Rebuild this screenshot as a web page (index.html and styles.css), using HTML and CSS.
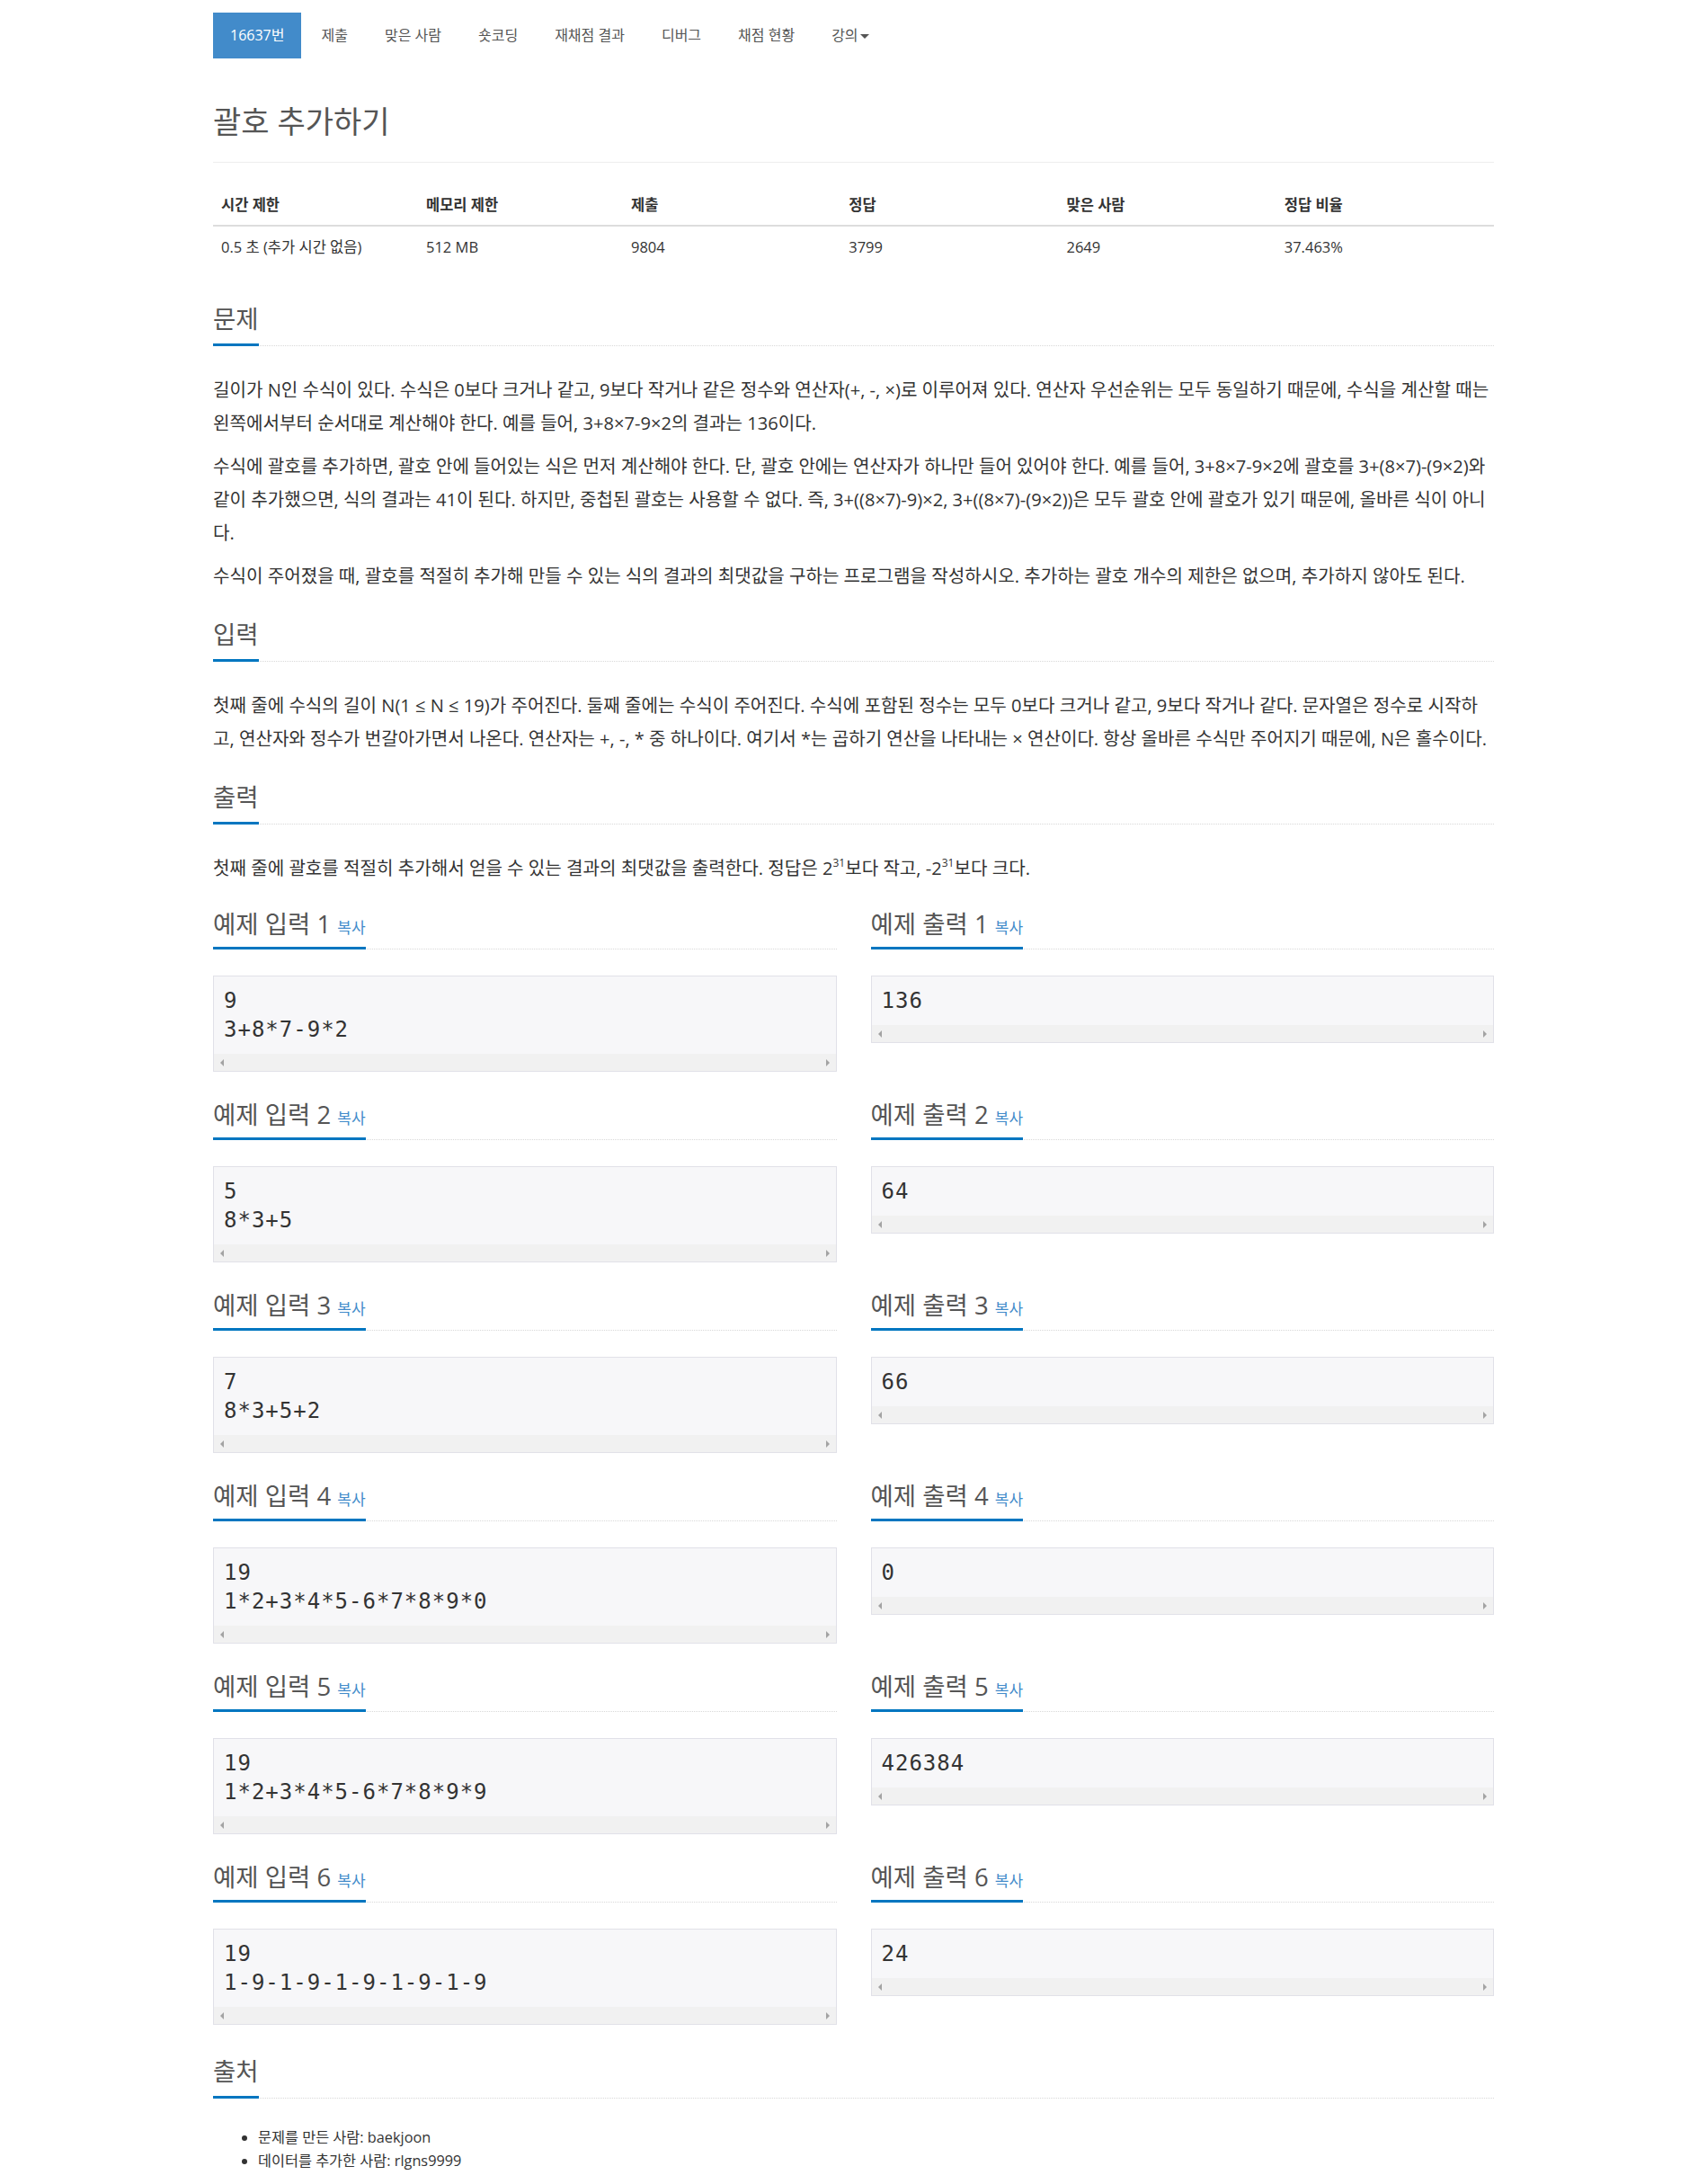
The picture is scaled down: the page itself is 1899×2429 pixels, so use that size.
FILE: index.html
```html
<!DOCTYPE html>
<html lang="ko">
<head>
  <meta charset="UTF-8">
  <title>16637번: 괄호 추가하기</title>
  <link rel="stylesheet" href="styles.css">
</head>
<body>
<div class="container">

  <!-- PROBLEM MENU -->
  <ul class="problem-menu">
    <li class="active"><a href="#">16637번</a></li>
    <li><a href="#">제출</a></li>
    <li><a href="#">맞은 사람</a></li>
    <li><a href="#">숏코딩</a></li>
    <li><a href="#">재채점 결과</a></li>
    <li><a href="#">디버그</a></li>
    <li><a href="#">채점 현황</a></li>
    <li><a href="#">강의<span class="caret"></span></a></li>
  </ul>

  <div class="page-header">
    <h1>괄호 추가하기</h1>
  </div>

  <table class="problem-info">
    <thead>
      <tr>
        <th class="w16">시간 제한</th>
        <th class="w16">메모리 제한</th>
        <th>제출</th>
        <th>정답</th>
        <th>맞은 사람</th>
        <th>정답 비율</th>
      </tr>
    </thead>
    <tbody>
      <tr>
        <td>0.5 초 (추가 시간 없음)</td>
        <td>512 MB</td>
        <td>9804</td>
        <td>3799</td>
        <td>2649</td>
        <td>37.463%</td>
      </tr>
    </tbody>
  </table>

  <!-- DESCRIPTION -->
  <section class="problem-section">
    <div class="headline"><h2>문제</h2></div>
    <div class="problem-text">
      <p>길이가 N인 수식이 있다. 수식은 0보다 크거나 같고, 9보다 작거나 같은 정수와 연산자(+, -, ×)로 이루어져 있다. 연산자 우선순위는 모두 동일하기 때문에, 수식을 계산할 때는 왼쪽에서부터 순서대로 계산해야 한다. 예를 들어, 3+8×7-9×2의 결과는 136이다.</p>
      <p>수식에 괄호를 추가하면, 괄호 안에 들어있는 식은 먼저 계산해야 한다. 단, 괄호 안에는 연산자가 하나만 들어 있어야 한다. 예를 들어, 3+8×7-9×2에 괄호를 3+(8×7)-(9×2)와 같이 추가했으면, 식의 결과는 41이 된다. 하지만, 중첩된 괄호는 사용할 수 없다. 즉, 3+((8×7)-9)×2, 3+((8×7)-(9×2))은 모두 괄호 안에 괄호가 있기 때문에, 올바른 식이 아니다.</p>
      <p>수식이 주어졌을 때, 괄호를 적절히 추가해 만들 수 있는 식의 결과의 최댓값을 구하는 프로그램을 작성하시오. 추가하는 괄호 개수의 제한은 없으며, 추가하지 않아도 된다.</p>
    </div>
  </section>

  <section class="problem-section">
    <div class="headline"><h2>입력</h2></div>
    <div class="problem-text">
      <p>첫째 줄에 수식의 길이 N(1 ≤ N ≤ 19)가 주어진다. 둘째 줄에는 수식이 주어진다. 수식에 포함된 정수는 모두 0보다 크거나 같고, 9보다 작거나 같다. 문자열은 정수로 시작하고, 연산자와 정수가 번갈아가면서 나온다. 연산자는 +, -, * 중 하나이다. 여기서 *는 곱하기 연산을 나타내는 × 연산이다. 항상 올바른 수식만 주어지기 때문에, N은 홀수이다.</p>
    </div>
  </section>

  <section class="problem-section">
    <div class="headline"><h2>출력</h2></div>
    <div class="problem-text">
      <p>첫째 줄에 괄호를 적절히 추가해서 얻을 수 있는 결과의 최댓값을 출력한다. 정답은 2<sup>31</sup>보다 작고, -2<sup>31</sup>보다 크다.</p>
    </div>
  </section>

  <!-- SAMPLES -->
  <div class="samples">
    <section class="sample">
      <div class="headline"><h2>예제 입력 1 <a class="copy" href="#">복사</a></h2></div>
      <div class="sample-box"><pre class="sampledata">9
3+8*7-9*2</pre><div class="scrollbar"><span class="arr-l"></span><span class="arr-r"></span></div></div>
    </section>
    <section class="sample">
      <div class="headline"><h2>예제 출력 1 <a class="copy" href="#">복사</a></h2></div>
      <div class="sample-box"><pre class="sampledata">136</pre><div class="scrollbar"><span class="arr-l"></span><span class="arr-r"></span></div></div>
    </section>

    <section class="sample">
      <div class="headline"><h2>예제 입력 2 <a class="copy" href="#">복사</a></h2></div>
      <div class="sample-box"><pre class="sampledata">5
8*3+5</pre><div class="scrollbar"><span class="arr-l"></span><span class="arr-r"></span></div></div>
    </section>
    <section class="sample">
      <div class="headline"><h2>예제 출력 2 <a class="copy" href="#">복사</a></h2></div>
      <div class="sample-box"><pre class="sampledata">64</pre><div class="scrollbar"><span class="arr-l"></span><span class="arr-r"></span></div></div>
    </section>

    <section class="sample">
      <div class="headline"><h2>예제 입력 3 <a class="copy" href="#">복사</a></h2></div>
      <div class="sample-box"><pre class="sampledata">7
8*3+5+2</pre><div class="scrollbar"><span class="arr-l"></span><span class="arr-r"></span></div></div>
    </section>
    <section class="sample">
      <div class="headline"><h2>예제 출력 3 <a class="copy" href="#">복사</a></h2></div>
      <div class="sample-box"><pre class="sampledata">66</pre><div class="scrollbar"><span class="arr-l"></span><span class="arr-r"></span></div></div>
    </section>

    <section class="sample">
      <div class="headline"><h2>예제 입력 4 <a class="copy" href="#">복사</a></h2></div>
      <div class="sample-box"><pre class="sampledata">19
1*2+3*4*5-6*7*8*9*0</pre><div class="scrollbar"><span class="arr-l"></span><span class="arr-r"></span></div></div>
    </section>
    <section class="sample">
      <div class="headline"><h2>예제 출력 4 <a class="copy" href="#">복사</a></h2></div>
      <div class="sample-box"><pre class="sampledata">0</pre><div class="scrollbar"><span class="arr-l"></span><span class="arr-r"></span></div></div>
    </section>

    <section class="sample">
      <div class="headline"><h2>예제 입력 5 <a class="copy" href="#">복사</a></h2></div>
      <div class="sample-box"><pre class="sampledata">19
1*2+3*4*5-6*7*8*9*9</pre><div class="scrollbar"><span class="arr-l"></span><span class="arr-r"></span></div></div>
    </section>
    <section class="sample">
      <div class="headline"><h2>예제 출력 5 <a class="copy" href="#">복사</a></h2></div>
      <div class="sample-box"><pre class="sampledata">426384</pre><div class="scrollbar"><span class="arr-l"></span><span class="arr-r"></span></div></div>
    </section>

    <section class="sample">
      <div class="headline"><h2>예제 입력 6 <a class="copy" href="#">복사</a></h2></div>
      <div class="sample-box"><pre class="sampledata">19
1-9-1-9-1-9-1-9-1-9</pre><div class="scrollbar"><span class="arr-l"></span><span class="arr-r"></span></div></div>
    </section>
    <section class="sample">
      <div class="headline"><h2>예제 출력 6 <a class="copy" href="#">복사</a></h2></div>
      <div class="sample-box"><pre class="sampledata">24</pre><div class="scrollbar"><span class="arr-l"></span><span class="arr-r"></span></div></div>
    </section>
  </div>

  <!-- SOURCE -->
  <section class="problem-section source">
    <div class="headline"><h2>출처</h2></div>
    <ul class="source-list">
      <li>문제를 만든 사람: <a href="#">baekjoon</a></li>
      <li>데이터를 추가한 사람: <a href="#">rlgns9999</a></li>
    </ul>
  </section>

</div>
</body>
</html>
```

FILE: styles.css
```css
:root {
  --text-color: #333;
  --head-color: #555;
  --blue: #0076c0;
  --link: #428bca;
  --border-color: #ddd;
}
body {
  font-family: "Open Sans", "Noto Sans CJK KR", sans-serif;
  margin: 0;
  padding: 0;
  background: #fff;
  color: var(--text-color);
}
a {
  color: inherit;
  text-decoration: none;
}
.container {
  width: 1425px;
  margin: 0 auto;
}

/* menu */
.problem-menu {
  display: flex;
  list-style: none;
  margin: 14px 0 0;
  padding: 0;
}
.problem-menu li + li {
  margin-left: 3px;
}
.problem-menu a {
  display: block;
  padding: 13px 19px;
  font-size: 16px;
  line-height: 25px;
  color: #555;
}
.problem-menu .active a {
  background: #428bca;
  color: #fff;
}
.caret {
  display: inline-block;
  width: 0;
  height: 0;
  margin-left: 2px;
  vertical-align: middle;
  border-top: 5px solid;
  border-left: 5px solid transparent;
  border-right: 5px solid transparent;
}

/* title */
.page-header {
  padding-bottom: 26px;
  border-bottom: 1px solid #eee;
}
.page-header h1 {
  margin: 52px 0 0;
  font-size: 34px;
  line-height: 37px;
  font-weight: normal;
  color: var(--head-color);
}

/* info table */
.problem-info {
  width: 100%;
  border-collapse: collapse;
  margin: 24px 0 43px;
  font-size: 16.5px;
}
.problem-info th,
.problem-info td {
  padding: 10px 9px;
  line-height: 25px;
  text-align: left;
}
.problem-info th {
  width: 17%;
  font-weight: bold;
  border-bottom: 2px solid var(--border-color);
}
.problem-info th.w16 {
  width: 16%;
}

/* sections */
.problem-section {
  margin-top: 32px;
}
.headline {
  border-bottom: 1px dotted #d8d8d8;
  margin-bottom: 30px;
}
.headline h2 {
  display: inline-block;
  margin: 0 0 -1px;
  padding-bottom: 12px;
  border-bottom: 3px solid var(--blue);
  font-size: 27.5px;
  line-height: 30px;
  font-weight: normal;
  color: var(--head-color);
}
.problem-text {
  font-size: 20.1px;
  line-height: 37px;
}
.problem-text p {
  margin: 0 0 11px;
}
sup {
  font-size: 12px;
  line-height: 0;
  vertical-align: 9px;
}

/* samples */
.samples {
  display: grid;
  grid-template-columns: 1fr 1fr;
  column-gap: 38px;
  align-items: start;
}
.sample {
  margin-top: 24px;
}
.samples .sample:nth-child(-n+2) {
  margin-top: 19px;
}
.sample .headline {
  margin-bottom: 29px;
}
.sample .headline h2 {
  line-height: 28px;
  padding-bottom: 11px;
}
.copy {
  font-size: 17px;
  line-height: 1;
  color: var(--link);
}
.sample-box {
  border: 1px solid #e1e1e8;
  background: #f7f7f9;
  margin-bottom: 10px;
}
.sampledata {
  margin: 0;
  padding: 11px;
  font-family: "DejaVu Sans Mono", "Liberation Mono", monospace;
  font-size: 24px;
  letter-spacing: 1px;
  line-height: 32px;
  color: #333;
}
.scrollbar {
  height: 19px;
  background: #f1f1f1;
  display: flex;
  align-items: center;
  justify-content: space-between;
  padding: 0 7px;
}
.arr-l,
.arr-r {
  width: 0;
  height: 0;
  border-top: 4px solid transparent;
  border-bottom: 4px solid transparent;
}
.arr-l {
  border-right: 4px solid #a3a3a3;
}
.arr-r {
  border-left: 4px solid #a3a3a3;
}

/* source */
.source {
  margin-top: 27px;
}
.source-list {
  margin: 0;
  padding-left: 50px;
  font-size: 16.3px;
  line-height: 26px;
}
```
